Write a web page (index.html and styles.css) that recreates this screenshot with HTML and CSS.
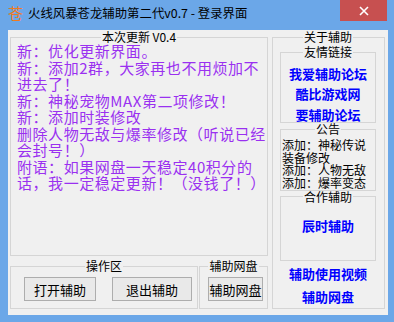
FILE: index.html
```html
<!DOCTYPE html>
<html lang="zh-CN">
<head>
    <meta charset="UTF-8">
    <title>火线风暴苍龙辅助第二代v0.7 - 登录界面</title>
    <link rel="stylesheet" href="styles.css">
</head>
<body>
    <div class="window">
        <div class="titlebar">
            <span class="app-icon">苍</span>
            <span class="title">火线风暴苍龙辅助第二代v0.7 - 登录界面</span>
            <div class="close-btn">
                <svg width="10" height="10" viewBox="0 0 10 10">
                    <path d="M1 1L9 9M9 1L1 9" stroke="#fff" stroke-width="1.6" fill="none"/>
                </svg>
            </div>
        </div>

        <div class="client">
            <div class="left-col">
                <fieldset class="group update-group">
                    <legend>本次更新 V0.4</legend>
                    <div class="update-text">
                        新：优化更新界面。<br>
                        新：添加2群，大家再也不用烦加不<br>
                        进去了！<br>
                        新：神秘宠物MAX第二项修改！<br>
                        新：添加时装修改<br>
                        删除人物无敌与爆率修改（听说已经<br>
                        会封号！）<br>
                        附语：如果网盘一天稳定40积分的<br>
                        话，我一定稳定更新！（没钱了！）
                    </div>
                </fieldset>

                <div class="bottom-row">
                    <fieldset class="group ops-group">
                        <legend>操作区</legend>
                        <button class="win-btn btn-open">打开辅助</button>
                        <button class="win-btn btn-exit">退出辅助</button>
                    </fieldset>
                    <fieldset class="group disk-group">
                        <legend>辅助网盘</legend>
                        <button class="win-btn btn-disk">辅助网盘</button>
                    </fieldset>
                </div>
            </div>

            <fieldset class="group about-group">
                <legend>关于辅助</legend>

                <fieldset class="group inner-group links-group">
                    <legend>友情链接</legend>
                    <a class="link">我爱辅助论坛</a>
                    <a class="link">酷比游戏网</a>
                    <a class="link">要辅助论坛</a>
                </fieldset>

                <fieldset class="group inner-group notice-group">
                    <legend>公告</legend>
                    <div class="notice-text">
                        添加：神秘传说<br>
                        装备修改<br>
                        添加：人物无敌<br>
                        添加：爆率变态
                    </div>
                </fieldset>

                <fieldset class="group inner-group partner-group">
                    <legend>合作辅助</legend>
                    <a class="link">辰时辅助</a>
                </fieldset>

                <div class="extra-links">
                    <a class="link">辅助使用视频</a>
                    <a class="link">辅助网盘</a>
                </div>
            </fieldset>
        </div>
    </div>
</body>
</html>
```

FILE: styles.css
```css
:root {
    --frame: #6ba7e8;
    --client-bg: #f0f0f0;
    --group-line: #d5d5d5;
    --purple: #9a30f0;
    --link: #0000ff;
}

* {
    margin: 0;
    padding: 0;
    box-sizing: border-box;
}

body {
    font-family: "Noto Sans CJK SC", "Noto Sans", sans-serif;
    background: var(--frame);
    width: 394px;
    height: 322px;
    overflow: hidden;
}

.window {
    width: 394px;
    height: 322px;
    background: var(--frame);
    display: flex;
    flex-direction: column;
}

/* title bar */
.titlebar {
    height: 30px;
    display: flex;
    align-items: flex-start;
    position: relative;
}

.app-icon {
    margin: 5px 0 0 8px;
    width: 16px;
    font-size: 15px;
    line-height: 16px;
    color: #f07a1e;
}

.title {
    margin: 6px 0 0 4px;
    font-size: 12.4px;
    line-height: 15px;
    color: #000;
}

.close-btn {
    position: absolute;
    top: 0;
    left: 340px;
    width: 47px;
    height: 21px;
    background: #c75050;
    display: flex;
    align-items: center;
    justify-content: center;
}

/* client area */
.client {
    height: 285px;
    margin: 0 6px 0 8px;
    background: var(--client-bg);
    padding: 1px 3px 0 2px;
    display: flex;
    gap: 4px;
    font-size: 12px;
    color: #000;
}

.group {
    border: 1px solid var(--group-line);
    min-width: 0;
    padding: 0;
}

.group legend {
    margin: 0 auto;
    padding: 0 1px;
    font-size: 12px;
    line-height: 12px;
    height: 12px;
    color: #000;
}

.left-col {
    width: 258px;
    display: flex;
    flex-direction: column;
    gap: 4px;
}

.update-group {
    height: 225px;
}

.update-text {
    padding: 0 0 0 6px;
    font-size: 15px;
    line-height: 16.5px;
    letter-spacing: 0.55px;
    color: var(--purple);
    white-space: nowrap;
}

.bottom-row {
    display: flex;
    gap: 1px;
    height: 49px;
}

.ops-group {
    width: 188px;
    display: flex;
}

.disk-group {
    width: 69px;
}

.win-btn {
    font-family: inherit;
    font-size: 13px;
    height: 24px;
    margin-top: 5px;
    background: #e9e9e9;
    border: 1px solid #adadad;
    color: #000;
}

.btn-open {
    width: 72px;
    margin-left: 13px;
}

.btn-exit {
    width: 80px;
    margin-left: 16px;
}

.btn-disk {
    width: 55px;
    margin-left: 8px;
}

/* right panel */
.about-group {
    width: 113px;
    height: 278px;
    display: flex;
    flex-direction: column;
    padding: 0 8px 0 7px;
}

.inner-group {
    width: 96px;
}

.link {
    display: block;
    text-align: center;
    color: var(--link);
    font-weight: bold;
    font-size: 13px;
}

.links-group {
    margin-top: 3px;
    height: 77px;
    padding-top: 5.5px;
}

.links-group .link {
    line-height: 20.5px;
}

.notice-group {
    height: 68px;
}

.notice-text {
    padding: 4px 0 0 1px;
    font-size: 12px;
    line-height: 12.5px;
    white-space: nowrap;
}

.partner-group {
    height: 70px;
    padding-top: 13px;
}

.partner-group .link {
    line-height: 20px;
}

.extra-links {
    margin-top: 1.5px;
}

.extra-links .link {
    line-height: 23px;
}
```
